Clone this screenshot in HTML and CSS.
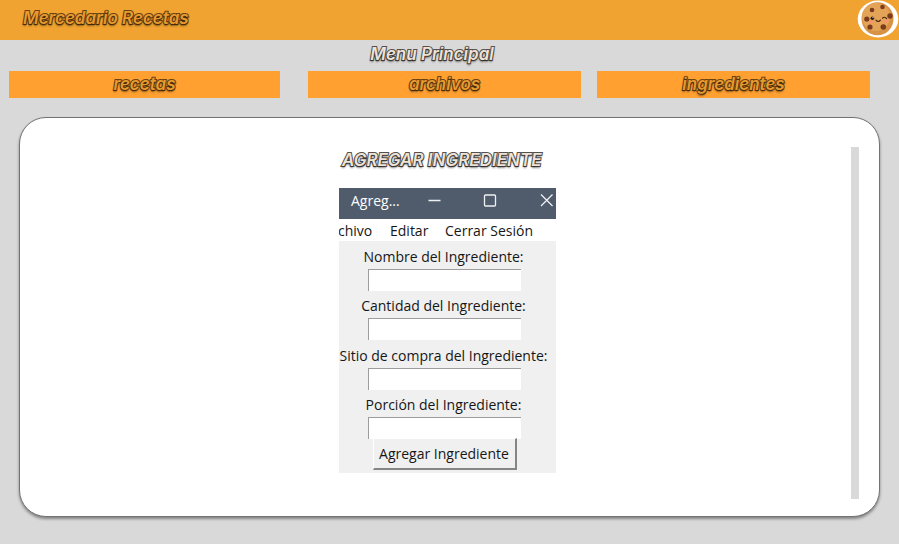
FILE: index.html
```html
<!DOCTYPE html>
<html lang="es">
<head>
<meta charset="utf-8">
<title>Mercedario Recetas</title>
<link rel="stylesheet" href="styles.css">
</head>
<body>
<header class="topbar">
  <h1 class="fancy orange brand">Mercedario Recetas</h1>
  <svg class="cookie" viewBox="0 0 42 38" width="42" height="38">
    <ellipse cx="21" cy="19" rx="20.3" ry="18.5" fill="#fff"/>
    <ellipse cx="20.5" cy="18.8" rx="16" ry="16.5" fill="#d79245"/>
    <ellipse cx="19" cy="17" rx="14" ry="14" fill="#e3a457"/>
    <g fill="#7b3b1d">
      <circle cx="25.5" cy="7" r="2.3"/><circle cx="15" cy="10" r="2.3"/>
      <circle cx="9.8" cy="19" r="2.6"/><circle cx="33" cy="16" r="2.7"/>
      <circle cx="13" cy="27" r="2.6"/><circle cx="26.3" cy="27" r="2.8"/>
    </g>
    <g fill="#ff8e78"><ellipse cx="14" cy="21.8" rx="2.3" ry="1.4"/><ellipse cx="28.5" cy="21.3" rx="2.2" ry="1.3"/></g>
    <circle cx="15.4" cy="18.2" r="1.8" fill="#241913"/><circle cx="16" cy="17.6" r=".6" fill="#fff"/>
    <path d="M25.5 18.2q2-2 4 .3M19 20.2q2.200 2.600 4.400 0" fill="none" stroke="#482311" stroke-width="1.200" stroke-linecap="round"/>
  </svg>
</header>
<h2 class="fancy pale heading">Menu Principal</h2>
<nav class="tabs">
  <a class="tab fancy orange"><span class="t1">recetas</span></a>
  <a class="tab fancy orange"><span class="t2">archivos</span></a>
  <a class="tab fancy orange"><span class="t3">ingredientes</span></a>
</nav>
<main class="card">
  <section class="content">
    <h3 class="fancy pale subtitle">AGREGAR INGREDIENTE</h3>
    <div class="window">
      <div class="titlebar">
        <span class="caption">Agreg...</span>
        <svg width="128" height="24" viewBox="0 0 128 24" fill="none" stroke="#eef1f4" stroke-width="1.300">
          <path d="M0.500 12.500h12M113 6.500l11.500 11.500M124.500 6.500l-11.500 11.500"/>
          <rect x="56.500" y="7" width="11" height="11" rx="1"/>
        </svg>
      </div>
      <div class="menubar"><span class="m1">chivo</span><span class="m2">Editar</span><span class="m3">Cerrar Sesión</span></div>
      <form class="form">
        <label class="l1">Nombre del Ingrediente:</label><div class="entry"></div>
        <label class="l2">Cantidad del Ingrediente:</label><div class="entry"></div>
        <label class="l3">Sitio de compra del Ingrediente:</label><div class="entry"></div>
        <label class="l4">Porción del Ingrediente:</label><div class="entry"></div>
        <div class="button">Agregar Ingrediente</div>
      </form>
    </div>
  </section>
  <div class="scrollbar"></div>
</main>
</body>
</html>
```

FILE: styles.css
```css
* { box-sizing: border-box; }
body {
  margin: 0;
  height: 544px;
  overflow: hidden;
  background: #d9d9d9;
  font-family: "Open Sans", "Noto Sans", sans-serif;
}
.fancy {
  margin: 0;
  font: italic 600 17px/24px Inter, sans-serif;
  white-space: nowrap;
  paint-order: stroke fill;
  text-shadow: 0 2px 2px rgba(0, 0, 0, .5);
}
.orange { color: #e79a2f; -webkit-text-stroke: 2px #6b4312; }
.pale { color: #eee3d8; -webkit-text-stroke: 2px #55504c; }
.topbar {
  display: flex;
  justify-content: space-between;
  height: 40px;
  padding: 0 0 0 23px;
  background: #f0a330;
}
.brand { padding-top: 6px; }
.cookie { flex: none; margin-top: 0; }
.heading { width: 864px; height: 31px; padding-top: 2px; text-align: center; }
.tabs {
  display: grid;
  grid-template-columns: 271px 273px 273px;
  column-gap: 28px;
  margin-left: 9px;
  height: 26px;
}
.tab { background: #ffa031; text-align: center; line-height: 27px; }
.tab:last-child { margin-left: -12px; margin-right: 12px; }
.card {
  display: flex;
  width: 861px;
  height: 400px;
  margin: 20px 0 0 19px;
  border: 1px solid #737373;
  border-radius: 27px;
  background: #fff;
  box-shadow: 0 2px 3px rgba(0, 0, 0, .4);
}
.content { flex: 1; padding: 30px 0 0 319px; }
.scrollbar { width: 8px; height: 352px; margin: 29px 20px 0 0; background: #d9d9d9; }
.subtitle { height: 40px; padding-left: 3px; }
.window { width: 217px; height: 285px; background: #f0f0f0; color: #161616; font-size: 14px; overflow: hidden; }
.titlebar {
  display: flex;
  height: 31px;
  padding-left: 12px;
  background: #505c6b;
  color: #fff;
  line-height: 25px;
}
.caption { width: 77px; }
.titlebar svg { flex: none; }
.menubar { display: flex; height: 22px; background: #fff; line-height: 24px; white-space: nowrap; }
.menubar .m1 { width: 51px; text-indent: -1px; }
.menubar .m2 { width: 55px; }
.form { display: flex; flex-direction: column; width: 209px; align-items: center; }
.form label { height: 28px; line-height: 31px; white-space: nowrap; }
.entry {
  width: 153px;
  height: 22px;
  margin: 0 0 -.7px 2px;
  border-top: 1px solid #9d9d9d;
  border-left: 1px solid #9d9d9d;
  background: #fff;
}
.button {
  width: 144px;
  height: 32px;
  margin-left: 2px;
  border: solid;
  border-width: 1px 2px 2px 1px;
  border-color: #fff #858585 #858585 #fff;
  text-align: center;
  line-height: 30px;
  white-space: nowrap;
}
```
